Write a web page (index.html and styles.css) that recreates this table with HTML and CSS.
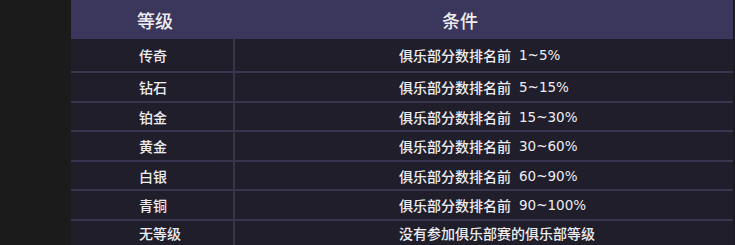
FILE: index.html
```html
<!DOCTYPE html>
<html lang="zh">
<head>
<meta charset="utf-8">
<link rel="stylesheet" href="styles.css">
</head>
<body>
<div class="page">
  <div class="side"></div>
  <div class="table">
    <div class="head">
      <div class="c1">等级</div>
      <div class="c2">条件</div>
    </div>
    <div class="row r32"><div class="c1">传奇</div><div class="c2">俱乐部分数排名前<span class="num">1~5%</span></div></div>
    <div class="row r28"><div class="c1">钻石</div><div class="c2">俱乐部分数排名前<span class="num">5~15%</span></div></div>
    <div class="row r27"><div class="c1">铂金</div><div class="c2">俱乐部分数排名前<span class="num">15~30%</span></div></div>
    <div class="row r28"><div class="c1">黄金</div><div class="c2">俱乐部分数排名前<span class="num">30~60%</span></div></div>
    <div class="row r27"><div class="c1">白银</div><div class="c2">俱乐部分数排名前<span class="num">60~90%</span></div></div>
    <div class="row r28"><div class="c1">青铜</div><div class="c2">俱乐部分数排名前<span class="num">90~100%</span></div></div>
    <div class="row last"><div class="c1">无等级</div><div class="c2">没有参加俱乐部赛的俱乐部等级</div></div>
  </div>
  <div class="edge"></div>
</div>
</body>
</html>
```
FILE: styles.css
```css
html, body {
  margin: 0;
  padding: 0;
  background: #1b1b1c;
}
.page {
  display: flex;
  width: 735px;
  height: 245px;
  overflow: hidden;
  font-family: "Noto Sans CJK SC", "Noto Sans", sans-serif;
  font-weight: 500;
  color: #ededf1;
}
.side {
  width: 71px;
  flex: none;
  background: #1b1b1c;
}
.edge {
  width: 2px;
  flex: none;
  background: #1c1b22;
}
.table {
  width: 662px;
  flex: none;
  display: flex;
  flex-direction: column;
  background: #201e2b;
}
.head {
  height: 39px;
  display: flex;
  align-items: center;
  background: #3b365b;
  font-size: 18px;
}
.head .c1 {
  width: 164px;
  padding-left: 66px;
  box-sizing: border-box;
}
.head .c2 {
  padding-left: 207px;
}
.row {
  display: flex;
  border-bottom: 2px solid #39354e;
  font-size: 14px;
}
.row .c1 {
  width: 164px;
  padding-left: 68px;
  box-sizing: border-box;
  border-right: 2px solid #39354e;
  display: flex;
  align-items: center;
}
.row .c2 {
  padding-left: 164px;
  display: flex;
  align-items: center;
}
.num {
  font-family: "DejaVu Sans", sans-serif;
  font-size: 13.5px;
  font-weight: 400;
  margin-left: 8px;
}
.r32 { height: 32px; }
.r28 { height: 28px; }
.r27 { height: 27px; }
.last { flex: 1; border-bottom: none; }
```
